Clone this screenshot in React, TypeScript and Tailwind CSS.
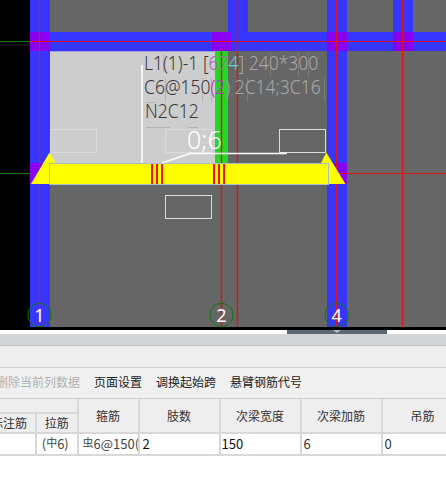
const cjk = `[font-family:'Noto_Sans_CJK_SC','Noto_Sans',sans-serif]`;

function Drawing() {
  const blue = "#3636ff";
  const purple = "#8a00f0";
  const red = "#e01212";
  const wires = "#dcdcdc";
  return (
    <svg width="446" height="327" viewBox="0 0 446 327" className="absolute left-0 top-0" shapeRendering="crispEdges">
      <rect x="30" y="0" width="416" height="327" fill="#666666" />
      <rect x="49.5" y="51" width="166" height="112" fill="#cdcdcd" />
      <rect x="215" y="51" width="12.5" height="112" fill="#22d822" />
      <rect x="49.5" y="50.5" width="166" height="1" fill="#9a9ae8" />
      {/* beams and columns */}
      <rect x="30" y="0" width="19.5" height="327" fill={blue} />
      <rect x="327" y="0" width="20" height="327" fill={blue} />
      <rect x="228" y="0" width="20" height="51" fill={blue} />
      <rect x="393" y="0" width="20" height="51" fill={blue} />
      <rect x="30" y="32" width="416" height="19" fill={blue} />
      {[[30, 19.5], [212, 19], [327, 20], [393, 20]].map(([x, w]) => (
        <rect key={x} x={x} y="32" width={w} height="19" fill={purple} />
      ))}
      <rect x="30" y="163" width="19.5" height="21" fill={purple} />
      <rect x="327" y="163" width="20" height="21" fill={purple} />
      {/* axes */}
      <rect x="0" y="41" width="30" height="1" fill="#0b7a0b" />
      <rect x="0" y="173" width="30" height="1" fill="#0b7a0b" />
      <rect x="30" y="41" width="416" height="1" fill={red} />
      <rect x="336" y="173" width="110" height="1" fill={red} />
      <g shapeRendering="auto">
        <rect x="38.9" y="0" width="1.3" height="327" fill="#c01a50" />
        <rect x="220.8" y="48" width="1.4" height="279" fill={red} />
        <rect x="236.7" y="0" width="1.4" height="327" fill={red} />
        <rect x="336" y="0" width="1.4" height="327" fill={red} />
        <rect x="402" y="0" width="1.4" height="327" fill={red} />
      </g>
      {/* stray dimension ticks behind the note */}
      <g fill="#b4b4b4">
        <rect x="163" y="54" width="1" height="18" />
        <rect x="165" y="78" width="1" height="24" />
        <rect x="202" y="78" width="1" height="24" />
        <rect x="211" y="78" width="1" height="24" />
        <rect x="146" y="102" width="9" height="1" />
        <rect x="146" y="127" width="24" height="1" />
        <rect x="188" y="127" width="10" height="1" />
      </g>
      <g fill="#787878">
        <rect x="270" y="53" width="1" height="24" />
        <rect x="298" y="53" width="1" height="24" />
        <rect x="308" y="53" width="1" height="24" />
        <rect x="247" y="78" width="1" height="24" />
        <rect x="324" y="78" width="1" height="24" />
      </g>
      {/* yellow beam with supports */}
      <g shapeRendering="auto">
        <polygon points="49.5,152.5 31,184 60,184 60,163 55.5,163" fill="#ffff00" />
        <polygon points="326.3,152.5 345.5,184 316,184 316,163 321,163" fill="#ffff00" />
      </g>
      <rect x="49.5" y="163.5" width="279" height="20.5" fill="#ffff00" stroke="#a6bfc9" strokeWidth="1" />
      {[151, 156, 161, 213, 218, 223].map((x) => (
        <rect key={x} x={x} y="164" width="2" height="20" fill="#f01010" />
      ))}
      {/* wire frames */}
      <g fill="none" stroke={wires} strokeWidth="1">
        <rect x="50.5" y="129.5" width="46" height="23" />
        <rect x="165.5" y="129.5" width="46" height="23" />
        <rect x="279.5" y="129.5" width="46" height="22.5" />
        <rect x="165.5" y="195.5" width="46" height="22.5" />
      </g>
      <g fill="none" stroke="#ffffff" strokeWidth="1.6" shapeRendering="auto">
        <path d="M142 65V163" />
        <path d="M162 163L190 153.5H287" />
      </g>
      {/* axis bubbles */}
      <g fill="none" stroke="#0b7a0b" strokeWidth="1" shapeRendering="auto">
        <circle cx="39.5" cy="315" r="11.7" />
        <circle cx="221.5" cy="315" r="11.7" />
        <circle cx="336.7" cy="315" r="11.7" />
      </g>
    </svg>
  );
}

function Note({ left, top, children }: { left: number; top: number; children: React.ReactNode }) {
  return (
    <div
      className="absolute origin-left scale-x-[0.875] whitespace-nowrap text-[20px] font-light leading-[24px] text-[#3a3a3a] [font-family:'Noto_Sans',sans-serif]"
      style={{ left, top }}
    >
      {children}
    </div>
  );
}

function Bubble({ left, n }: { left: number; n: string }) {
  return (
    <div
      className="absolute top-[303px] w-6 text-center text-[18px] leading-[24px] text-white [font-family:'Noto_Sans',sans-serif]"
      style={{ left }}
    >
      {n}
    </div>
  );
}

function Cell({ className = "", children }: { className?: string; children?: React.ReactNode }) {
  return <div className={`shrink-0 border-r-2 border-[#d8d8d8] ${className}`}>{children}</div>;
}

export default function App() {
  return (
    <div className={`h-[491px] w-[446px] overflow-hidden bg-white ${cjk}`}>
      <div className="relative h-[330px] bg-black">
        <Drawing />
        <Note left={144} top={51}>
          L1(1)-1 [<span className="text-[#a06aa8]">6</span>
          <span className="text-[#9a7aa0]">7</span>
          <span className="text-[#5fd0d8]">4</span>
          <span className="text-[#a8a8a8]">] 240*300</span>
        </Note>
        <Note left={144} top={75}>
          C6@150<span className="text-[#c030d0]">(2</span>
          <span className="text-[#a8a8a8]">) 2C14;3C16</span>
        </Note>
        <Note left={145} top={99}>
          N2C12
        </Note>
        <div className="absolute left-[187px] top-[122px] text-[25px] font-light leading-[34px] text-white [font-family:'Noto_Sans',sans-serif]">
          0;6
        </div>
        <Bubble left={27.5} n="1" />
        <Bubble left={209.5} n="2" />
        <Bubble left={324.7} n="4" />
      </div>

      <div className="relative flex h-1 justify-center bg-white">
        <div className="ml-[228px] flex h-1 w-[100px] justify-center bg-[#5c6873]">
          <div className="h-0 w-0 border-x-[4px] border-t-[3px] border-x-transparent border-t-[#b8bec4]" />
        </div>
      </div>

      <div className="h-[11px] border-b border-[#c4c5c9] bg-[#d4d5d9] box-content" />
      <div className="h-[21px] border-b border-[#cfcfcf] bg-[#eeeeee] box-content" />
      <div className="flex h-[31px] items-center border-b border-[#cfcfcf] bg-[#f0f0f0] pb-[2px] text-[12px] text-[#222222] box-border">
        <span className="ml-[-4px] w-[98px] shrink-0 whitespace-nowrap text-[#b0b0b0]">删除当前列数据</span>
        <span className="w-[62px] shrink-0 whitespace-nowrap">页面设置</span>
        <span className="w-[74px] shrink-0 whitespace-nowrap">调换起始跨</span>
        <span className="shrink-0 whitespace-nowrap">悬臂钢筋代号</span>
      </div>

      <div className="flex h-[33px] border-b-2 border-[#d8d8d8] bg-[#eeeeee] text-[12px] text-[#333333] box-content">
        <div className="flex w-[78.5px] shrink-0 flex-col border-r-2 border-[#d8d8d8]">
          <div className="h-[16px] border-b-2 border-[#d8d8d8] box-content" />
          <div className="flex flex-1 items-center">
            <div className="flex h-full w-[37px] shrink-0 items-center justify-end overflow-hidden border-r-2 border-[#d8d8d8] pr-2 whitespace-nowrap">
              <span className="shrink-0">标注筋</span>
            </div>
            <div className="flex-1 text-center">拉筋</div>
          </div>
        </div>
        <Cell className="flex w-[61px] items-center justify-center">箍筋</Cell>
        <Cell className="flex w-[81px] items-center justify-center">肢数</Cell>
        <Cell className="flex w-[81px] items-center justify-center">次梁宽度</Cell>
        <Cell className="flex w-[81px] items-center justify-center">次梁加筋</Cell>
        <div className="flex w-[80px] shrink-0 items-center justify-center">吊筋</div>
      </div>

      <div className="flex h-[20px] items-center border-b-2 border-[#d8d8d8] bg-white text-[13px] text-[#333333] box-content">
        <Cell className="h-full w-[37px]" />
        <Cell className="flex h-full w-[41.5px] items-center justify-center whitespace-nowrap pr-[3px] text-[#444444]">
          (<span className="relative top-[-2px] text-[11px]">中</span>6)
        </Cell>
        <Cell className="flex h-full w-[61px] items-center overflow-hidden whitespace-nowrap pl-[4px] text-[#444444]">
          <span className="relative top-[-2px] text-[11px]">虫</span>6@150(
        </Cell>
        <Cell className="flex h-full w-[81px] items-center pl-[3px] text-[#111111]">2</Cell>
        <Cell className="flex h-full w-[81px] items-center pl-[1px] text-[#111111]">150</Cell>
        <Cell className="flex h-full w-[81px] items-center pl-[2px]">6</Cell>
        <div className="flex h-full items-center pl-[2px]">0</div>
      </div>
    </div>
  );
}
